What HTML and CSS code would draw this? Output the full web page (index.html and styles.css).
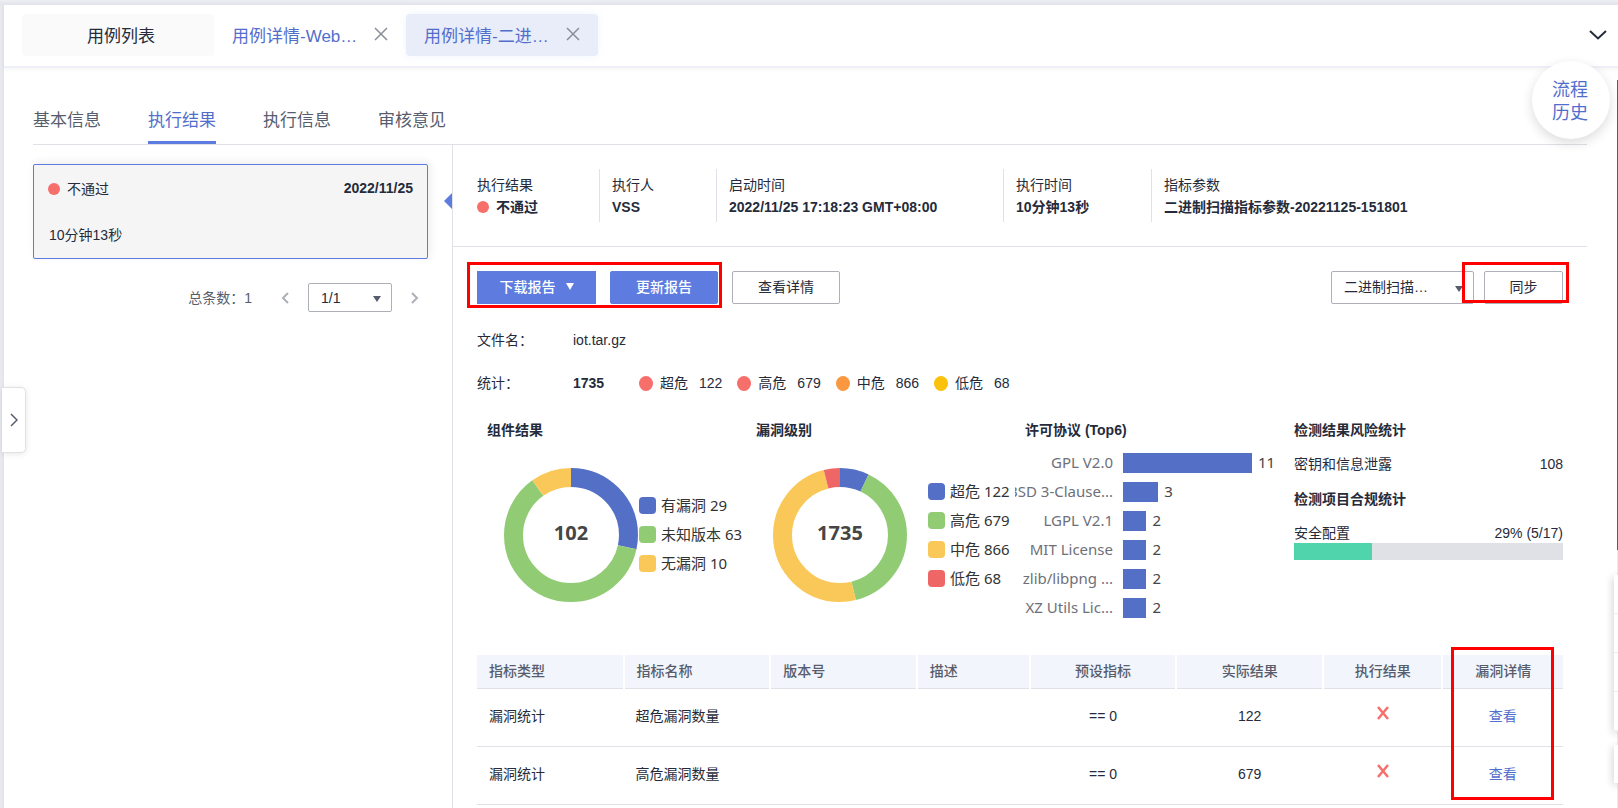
FILE: index.html
```html
<!DOCTYPE html>
<html lang="zh-CN">
<head>
<meta charset="utf-8">
<meta name="viewport" content="width=device-width, initial-scale=1">
<title>用例详情</title>
<link rel="stylesheet" href="styles.css">
</head>
<body>
<div class="app">
  <header class="topbar">
    <nav class="pages">
      <button class="page page-home" type="button">用例列表</button>
      <div class="page">
        <a href="#web">用例详情-Web…</a>
        <button class="close" type="button" aria-label="关闭"><svg width="14" height="14" viewBox="0 0 14 14"><path d="M1 1l12 12M13 1L1 13"/></svg></button>
      </div>
      <div class="page page-current">
        <a href="#binary">用例详情-二进…</a>
        <button class="close" type="button" aria-label="关闭"><svg width="14" height="14" viewBox="0 0 14 14"><path d="M1 1l12 12M13 1L1 13"/></svg></button>
      </div>
    </nav>
    <button class="more" type="button" aria-label="更多"><svg width="18" height="10" viewBox="0 0 18 10"><path d="M1 1l8 7.500 8-7.500"/></svg></button>
  </header>

  <main class="main">
    <nav class="tabs">
      <a href="#basic">基本信息</a>
      <a href="#result" class="active">执行结果</a>
      <a href="#info">执行信息</a>
      <a href="#review">审核意见</a>
    </nav>

    <div class="columns">
      <aside class="runs">
        <article class="run">
          <div class="run-head">
            <span class="status"><i class="dot"></i>不通过</span>
            <time class="run-date">2022/11/25</time>
          </div>
          <div class="run-time">10分钟13秒</div>
        </article>
        <div class="pager">
          <span class="total">总条数：1</span>
          <button class="step" type="button" aria-label="上一页"><svg width="8" height="12" viewBox="0 0 8 12"><path d="M7 1L2 6l5 5"/></svg></button>
          <span class="picker"><select aria-label="页码"><option>1/1</option></select></span>
          <button class="step" type="button" aria-label="下一页"><svg width="8" height="12" viewBox="0 0 8 12"><path d="M1 1l5 5-5 5"/></svg></button>
        </div>
      </aside>

      <section class="detail">
        <dl class="summary">
          <div><dt>执行结果</dt><dd><span class="status"><i class="dot"></i>不通过</span></dd></div>
          <div><dt>执行人</dt><dd>VSS</dd></div>
          <div><dt>启动时间</dt><dd>2022/11/25 17:18:23 GMT+08:00</dd></div>
          <div><dt>执行时间</dt><dd>10分钟13秒</dd></div>
          <div><dt>指标参数</dt><dd>二进制扫描指标参数-20221125-151801</dd></div>
        </dl>

        <div class="body">
          <div class="toolbar">
            <div class="mark mark-report">
              <button class="btn primary download" type="button">下载报告<i class="caret"></i></button>
              <button class="btn primary" type="button">更新报告</button>
            </div>
            <button class="btn" type="button">查看详情</button>
            <div class="sync">
              <span class="picker picker-scan"><select aria-label="扫描类型"><option>二进制扫描…</option></select></span>
              <div class="mark mark-sync"><button class="btn btn-sync" type="button">同步</button></div>
            </div>
          </div>

          <div class="field file"><span class="name">文件名：</span><span>iot.tar.gz</span></div>
          <div class="field stats">
            <span class="name">统计：</span><b class="sum">1735</b>
            <ul class="levels">
              <li><i class="level critical"></i><span>超危</span><span>122</span></li>
              <li><i class="level high"></i><span>高危</span><span>679</span></li>
              <li><i class="level medium"></i><span>中危</span><span>866</span></li>
              <li><i class="level low"></i><span>低危</span><span>68</span></li>
            </ul>
          </div>

          <div class="charts">
            <section>
              <h3>组件结果</h3>
              <div class="pie">
                <svg class="donut" viewBox="0 0 134 134" role="img" aria-label="组件结果">
                  <g transform="rotate(-90 67 67)">
                    <circle class="blue" pathLength="102" stroke-dasharray="29 73" cx="67" cy="67" r="57.5"/>
                    <circle class="green" pathLength="102" stroke-dasharray="63 39" stroke-dashoffset="-29" cx="67" cy="67" r="57.5"/>
                    <circle class="yellow" pathLength="102" stroke-dasharray="10 92" stroke-dashoffset="-92" cx="67" cy="67" r="57.5"/>
                  </g>
                  <text x="67" y="72">102</text>
                </svg>
                <ul class="legend">
                  <li><i class="blue"></i>有漏洞 29</li>
                  <li><i class="green"></i>未知版本 63</li>
                  <li><i class="yellow"></i>无漏洞 10</li>
                </ul>
              </div>
            </section>
            <section>
              <h3>漏洞级别</h3>
              <div class="pie pie-levels">
                <svg class="donut" viewBox="0 0 134 134" role="img" aria-label="漏洞级别">
                  <g transform="rotate(-90 67 67)">
                    <circle class="blue" pathLength="1735" stroke-dasharray="122 1613" cx="67" cy="67" r="57.5"/>
                    <circle class="green" pathLength="1735" stroke-dasharray="679 1056" stroke-dashoffset="-122" cx="67" cy="67" r="57.5"/>
                    <circle class="yellow" pathLength="1735" stroke-dasharray="866 869" stroke-dashoffset="-801" cx="67" cy="67" r="57.5"/>
                    <circle class="red" pathLength="1735" stroke-dasharray="68 1667" stroke-dashoffset="-1667" cx="67" cy="67" r="57.5"/>
                  </g>
                  <text x="67" y="72">1735</text>
                </svg>
                <ul class="legend">
                  <li><i class="blue"></i>超危 122</li>
                  <li><i class="green"></i>高危 679</li>
                  <li><i class="yellow"></i>中危 866</li>
                  <li><i class="red"></i>低危 68</li>
                </ul>
              </div>
            </section>
            <section>
              <h3>许可协议 (Top6)</h3>
              <ul class="bars">
                <li><span class="bar-name">GPL V2.0</span><span class="track"><i class="bar" style="width:100%"></i><span>11</span></span></li>
                <li><span class="bar-name">BSD 3-Clause...</span><span class="track"><i class="bar" style="width:27.300%"></i><span>3</span></span></li>
                <li><span class="bar-name">LGPL V2.1</span><span class="track"><i class="bar" style="width:18.200%"></i><span>2</span></span></li>
                <li><span class="bar-name">MIT License</span><span class="track"><i class="bar" style="width:18.200%"></i><span>2</span></span></li>
                <li><span class="bar-name">zlib/libpng ...</span><span class="track"><i class="bar" style="width:18.200%"></i><span>2</span></span></li>
                <li><span class="bar-name">XZ Utils Lic...</span><span class="track"><i class="bar" style="width:18.200%"></i><span>2</span></span></li>
              </ul>
            </section>
            <section class="risk">
              <h3>检测结果风险统计</h3>
              <div class="pair"><span>密钥和信息泄露</span><span>108</span></div>
              <h3 class="next">检测项目合规统计</h3>
              <div class="pair"><span>安全配置</span><span>29% (5/17)</span></div>
              <div class="meter" role="img" aria-label="29%"><i style="width:29%"></i></div>
            </section>
          </div>

          <div class="table-box">
            <table>
              <colgroup><col class="c-wide"><col class="c-wide"><col class="c-wide"><col class="c-desc"><col class="c-wide"><col class="c-wide"><col class="c-end"><col></colgroup>
              <thead>
                <tr><th>指标类型</th><th>指标名称</th><th>版本号</th><th>描述</th><th class="mid">预设指标</th><th class="mid">实际结果</th><th class="mid">执行结果</th><th class="mid">漏洞详情</th></tr>
              </thead>
              <tbody>
                <tr><td>漏洞统计</td><td>超危漏洞数量</td><td></td><td></td><td class="mid">== 0</td><td class="mid">122</td><td class="mid"><svg class="fail" viewBox="0 0 12 14" role="img" aria-label="不通过"><path d="M1 1l10 12M11 1L1 13"/></svg></td><td class="mid"><a href="#d1">查看</a></td></tr>
                <tr><td>漏洞统计</td><td>高危漏洞数量</td><td></td><td></td><td class="mid">== 0</td><td class="mid">679</td><td class="mid"><svg class="fail" viewBox="0 0 12 14" role="img" aria-label="不通过"><path d="M1 1l10 12M11 1L1 13"/></svg></td><td class="mid"><a href="#d2">查看</a></td></tr>
              </tbody>
            </table>
          </div>
        </div>
      </section>
    </div>
  </main>

  <button class="drawer" type="button" aria-label="展开"><svg width="8" height="14" viewBox="0 0 8 14"><path d="M1 1l6 6-6 6"/></svg></button>
  <button class="history" type="button">流程<br>历史</button>
  <div class="rail"></div>
  <div class="dock dock-main"><i></i><i></i><i></i><i></i></div>
  <div class="dock dock-extra"></div>
</div>
</body>
</html>
```
FILE: styles.css
```css
*, *::before, *::after { box-sizing: border-box; }

body {
  margin: 0;
  background: #e9ebf1;
  color: #252b3a;
  font: 14px/20px "Liberation Sans", "Noto Sans CJK SC", sans-serif;
}

button, select { margin: 0; font: inherit; color: inherit; }
button { padding: 0; border: 0; background: none; cursor: pointer; }
a { color: #526ecc; text-decoration: none; }
ul, dl, dd, h3 { margin: 0; padding: 0; list-style: none; }
i { font-style: normal; }
svg { display: block; }
svg path { fill: none; stroke: currentColor; }

.app {
  position: relative;
  display: flex;
  flex-direction: column;
  min-height: 100vh;
  padding: 5px 0 0 4px;
  overflow: hidden;
  background: linear-gradient(#eeeff4, #e2e4eb 5px, transparent 5px), linear-gradient(90deg, #e9ebf1, #e2e4ea 4px);
}

/* Open pages */
.topbar {
  display: flex;
  align-items: center;
  justify-content: space-between;
  padding: 9px 11px 10px 18px;
  border-bottom: 2px solid #eeeff7;
  background: #fff;
  box-shadow: 0 2px 4px rgba(0, 0, 0, .04);
  z-index: 1;
}
.pages { display: flex; }
.page {
  display: flex;
  align-items: center;
  justify-content: space-between;
  width: 192px;
  height: 42px;
  padding: 4px 18px 0;
  border-radius: 4px;
  font-size: 17px;
  line-height: 24px;
}
.page-home { justify-content: center; padding: 4px 15px 0 21px; background: #fafafa; color: #252b3a; }
.page-current { background: #e9edfa; box-shadow: 0 0 8px rgba(94, 124, 224, .08); }
.close { padding-bottom: 6px; color: #8a8e99; }
.close path { stroke-width: 1.5; }
.more { color: #252b3a; }
.more path { stroke-width: 2; }

/* Section tabs */
.main {
  display: flex;
  flex: 1;
  flex-direction: column;
  padding: 28px 31px 0 29px;
  background: #fff;
}
.tabs {
  display: flex;
  gap: 47px;
  border-bottom: 1px solid #dfe1e6;
  font-size: 17px;
}
.tabs a { padding: 15px 0 10px; border-bottom: 3px solid transparent; line-height: 20px; color: #575d6c; }
.tabs .active { border-color: #5e7ce0; color: #526ecc; }

.columns { display: grid; flex: 1; grid-template-columns: 419px minmax(0, 1fr); }

/* Runs */
.run {
  margin: 19px 24px 0 0;
  height: 95px;
  padding: 14px 14px 12px;
  border: 1px solid #5e7ce0;
  border-radius: 2px;
  background: #f5f5f5;
  box-shadow: 2px -2px 8px rgba(0, 0, 0, .08);
}
.run-head { display: flex; justify-content: space-between; align-items: flex-start; }
.run-date { font-weight: 700; line-height: 18px; }
.run-time { margin-top: 26px; padding-left: 1px; }
.status { display: inline-flex; align-items: center; gap: 7px; }
.dot { width: 12px; height: 12px; border-radius: 50%; background: #f66f6a; }

.pager {
  display: flex;
  align-items: center;
  justify-content: flex-end;
  margin: 24px 33px 0 0;
  color: #575d6c;
}
.total { margin-right: 29px; }
.step { color: #adb0b8; }
.step path { stroke-width: 2; }
.picker { position: relative; width: 84px; margin: 0 19px; }
.picker select {
  display: block;
  width: 100%;
  height: 29px;
  padding: 0 12px;
  border: 1px solid #adb0b8;
  border-radius: 2px;
  background: #fff;
  color: #252b3a;
  appearance: none;
}
.picker::after {
  content: "";
  position: absolute;
  top: 50%;
  right: 11px;
  margin-top: -2px;
  border: 4px solid transparent;
  border-top: 6px solid #575d6c;
  border-bottom: 0;
}

/* Detail */
.detail { position: relative; border-left: 1px solid #dfe1e6; }
.detail::before {
  content: "";
  position: absolute;
  top: 48px;
  left: -9px;
  border: 8px solid transparent;
  border-right-color: #5e7ce0;
  border-left: 0;
}
.summary {
  display: grid;
  grid-template-columns: 122px 117px 287px 148px 1fr;
  padding: 24px 0 24px 24px;
  border-bottom: 1px solid #dfe1e6;
  line-height: 22px;
}
.summary > div { height: 53px; padding: 5px 0 0 12px; border-left: 1px solid #dfe1e6; }
.summary > div:first-child { padding-left: 0; border-left: 0; }
.summary dd { font-weight: 700; }

.body { padding: 24px 24px 0; }
.toolbar { display: flex; gap: 14px; }
.sync { display: flex; gap: 10px; margin-left: auto; }
.btn {
  width: 108px;
  height: 33px;
  padding-bottom: 2px;
  border: 1px solid #adb0b8;
  border-radius: 2px;
  background: #fff;
  line-height: 20px;
}
.btn.primary { border-color: #5e7ce0; background: #5e7ce0; color: #fff; font-weight: 500; }
.btn.download { display: flex; align-items: center; justify-content: center; gap: 10px; width: 119px; border-radius: 0; }
.btn.btn-sync { width: 79px; }
.caret { border: 4px solid transparent; border-top: 7px solid #fff; border-bottom: 0; }
.picker-scan { width: 143px; margin: 0; }
.picker-scan select { height: 33px; padding-bottom: 2px; }

.mark { position: relative; display: flex; gap: 14px; }
.mark::after, .table-box::after {
  content: "";
  position: absolute;
  border: 3px solid #f00;
  pointer-events: none;
}
.mark-report::after { inset: -9px -4px -4px -10px; }
.mark-sync::after { inset: -9px -6px 1px -22px; }

.field { display: flex; }
.name { width: 96px; }
.file { margin-top: 26px; }
.stats { margin-top: 23px; }
.sum { width: 66px; }
.levels, .levels li { display: flex; align-items: center; }
.levels { gap: 15px; }
.level { width: 14px; height: 15px; margin-right: 7px; border-radius: 50%; }
.levels span + span { margin-left: 11px; }
.critical, .high { background: #f66f6a; }
.medium { background: #fa9841; }
.low { background: #fac20a; }

/* Charts */
.charts {
  display: grid;
  grid-template-columns: repeat(4, minmax(0, 1fr));
  margin-top: 27px;
  padding-left: 10px;
}
h3 { font-size: 14px; line-height: 20px; font-weight: 700; }
.pie { display: flex; align-items: center; gap: 1px; margin: 28px -20px 0 17px; }
.pie-levels { gap: 21px; }
.donut { flex: none; width: 134px; }
.donut circle { fill: none; stroke-width: 19; }
.donut .blue { stroke: #5470c6; }
.donut .green { stroke: #91cc75; }
.donut .yellow { stroke: #fac858; }
.donut .red { stroke: #ee6666; }
.donut text { fill: #464646; font: 700 20px "Noto Sans", sans-serif; text-anchor: middle; }
.legend {
  display: grid;
  gap: 9px;
  color: #333;
  font-family: "Noto Sans", "Noto Sans CJK SC", sans-serif;
  font-size: 15px;
  line-height: 18px;
  white-space: nowrap;
}
.legend li { display: flex; align-items: flex-start; gap: 5px; height: 20px; }
.legend i { width: 17px; height: 17px; margin-top: 1px; border-radius: 4px; }
.legend .blue, .bar { background: #5470c6; }
.legend .green { background: #91cc75; }
.legend .yellow { background: #fac858; }
.legend .red { background: #ee6666; }

.bars {
  display: grid;
  gap: 9px;
  margin: 13px 0 0 -10px;
  font-family: "Noto Sans", sans-serif;
  font-size: 15px;
  line-height: 18px;
  color: #464646;
}
.bars li { display: flex; height: 20px; }
.bar-name {
  display: flex;
  flex: none;
  justify-content: flex-end;
  width: 98px;
  overflow: hidden;
  color: #6e7079;
  white-space: nowrap;
}
.track { display: flex; flex: 1; gap: 6px; margin: 0 42px 0 10px; }
.bar { flex: none; }

.pair { display: flex; justify-content: space-between; margin-top: 14px; }
.next { margin-top: 15px; }
.meter { height: 17px; background: #dfe1e6; }
.meter i { display: block; height: 100%; background: #50d4ab; }

/* Table */
.table-box { position: relative; margin-top: 37px; }
.table-box::after { top: -8px; right: 9px; bottom: 5px; width: 103px; }
table { width: 100%; border-collapse: collapse; table-layout: fixed; }
.c-wide { width: 13.5%; }
.c-desc { width: 10.4%; }
.c-end { width: 11%; }
th, td { padding: 0 12px; border-bottom: 1px solid #dfe1e6; text-align: left; }
th { height: 33px; border-right: 2px solid #fff; background: #f2f5fc; color: #575d6c; font-weight: 500; }
th:last-child { border-right: 0; }
td { height: 58px; padding-bottom: 2px; }
th.mid, td.mid { text-align: center; }
.fail { width: 12px; height: 14px; margin: 0 auto 6px; color: #f66f6a; }
.fail path { stroke-width: 2.5; }

/* Floating controls */
.drawer {
  position: absolute;
  z-index: 2;
  top: 387px;
  left: 2px;
  display: flex;
  align-items: center;
  justify-content: center;
  width: 24px;
  height: 66px;
  border: 1px solid #dfe1e6;
  border-left: 0;
  border-radius: 0 5px 5px 0;
  background: #fff;
  box-shadow: 0 1px 6px rgba(0, 0, 0, .1);
  color: #575d6c;
}
.drawer path { stroke-width: 1.5; }
.history {
  position: absolute;
  z-index: 2;
  top: 61px;
  right: 8px;
  width: 78px;
  height: 78px;
  padding: 4px 2px 0 0;
  border-radius: 50%;
  background: #fff;
  box-shadow: 0 4px 12px rgba(0, 0, 0, .14);
  color: #526ecc;
  font-size: 18px;
  line-height: 23px;
}
.rail { position: absolute; top: 80px; right: 0; bottom: 0; width: 1px; background: linear-gradient(#575d6c 470px, #e9ebf1 470px); }
.dock { position: absolute; right: 0; width: 4px; background: #fff; box-shadow: 0 2px 8px rgba(0, 0, 0, .3); }
.dock-main { top: 575px; }
.dock-main i { display: block; height: 39px; border-bottom: 1px solid #eeeff4; }
.dock-extra { top: 745px; height: 38px; }
```
